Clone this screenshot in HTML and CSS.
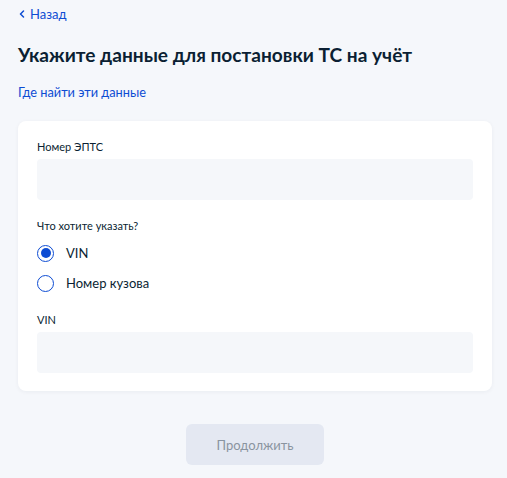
FILE: index.html
```html
<!DOCTYPE html>
<html>

<head>
  <meta charset="utf-8">
  <meta name="viewport" content="width=device-width">
  <title>Постановка ТС на учёт</title>
  <link rel="stylesheet" href="styles.css">
</head>

<body>
  <a class="back-link" href="#">
    <svg width="8" height="8" viewBox="0 0 8 8"><path d="M5.5 1 L2.5 4 L5.5 7" fill="none" stroke="#0d4cd3" stroke-width="1.5" stroke-linecap="round" stroke-linejoin="round"/></svg>
    Назад
  </a>

  <h1 class="title">Укажите данные для постановки ТС на учёт</h1>
  <a class="help-link" href="#">Где найти эти данные</a>

  <div class="card">
    <label class="field-label">Номер ЭПТС</label>
    <input class="field-input" type="text">

    <p class="group-label">Что хотите указать?</p>
    <label class="radio">
      <input type="radio" name="kind" checked>
      <span class="radio-mark"></span>
      VIN
    </label>
    <label class="radio">
      <input type="radio" name="kind">
      <span class="radio-mark"></span>
      Номер кузова
    </label>

    <label class="field-label field-label-gap">VIN</label>
    <input class="field-input" type="text">
  </div>

  <div class="actions">
    <button class="button" disabled>Продолжить</button>
  </div>
</body>

</html>
```

FILE: styles.css
```css
body {
  font-family: Lato, "Noto Sans", sans-serif;
  background-color: #f5f7fb;
  color: #0b1f33;
  margin: 0;
  padding: 0 18px;
  height: 478px;
  box-sizing: border-box;
}

.back-link {
  display: flex;
  align-items: center;
  gap: 4px;
  padding-top: 6px;
  padding-left: 0;
  font-size: 13px;
  line-height: 16px;
  color: #0d4cd3;
  text-decoration: none;
}

.title {
  font-size: 19.1px;
  font-weight: 700;
  line-height: 24px;
  margin: 21px 0 0;
}

.help-link {
  display: block;
  margin-top: 17px;
  font-size: 12.8px;
  line-height: 16px;
  color: #0d4cd3;
  text-decoration: none;
}

/* белая карточка с полями */
.card {
  margin-top: 21px;
  background-color: #ffffff;
  border-radius: 8px;
  padding: 19px 19px 18px;
  width: 474px;
  box-sizing: border-box;
  box-shadow: 0 1px 4px rgba(11, 31, 51, 0.05);
}

.field-label {
  display: block;
  font-size: 11px;
  line-height: 14px;
  color: #0b1f33;
}

.field-label-gap {
  margin-top: 15px;
}

.field-input {
  display: block;
  width: 100%;
  height: 41px;
  margin-top: 5px;
  border: none;
  border-radius: 4px;
  background-color: #f5f7fa;
  box-sizing: border-box;
}

.group-label {
  font-size: 11px;
  line-height: 14px;
  margin: 19px 0 5px;
}

.radio {
  display: flex;
  align-items: center;
  gap: 12px;
  height: 30px;
  font-size: 13px;
  cursor: pointer;
}

.radio input {
  display: none;
}

.radio-mark {
  width: 17px;
  height: 17px;
  border: 1.5px solid #0d4cd3;
  border-radius: 50%;
  box-sizing: border-box;
  display: flex;
  align-items: center;
  justify-content: center;
}

.radio input:checked + .radio-mark::after {
  content: "";
  width: 10px;
  height: 10px;
  border-radius: 50%;
  background-color: #0d4cd3;
}

.actions {
  display: flex;
  justify-content: center;
  padding-top: 33px;
  padding-left: 3px;
}

.button {
  width: 138px;
  height: 41px;
  border: none;
  border-radius: 6px;
  background-color: #e4e8f2;
  color: #8a94a0;
  font-family: Lato, "Noto Sans", sans-serif;
  font-size: 13px;
}
```
